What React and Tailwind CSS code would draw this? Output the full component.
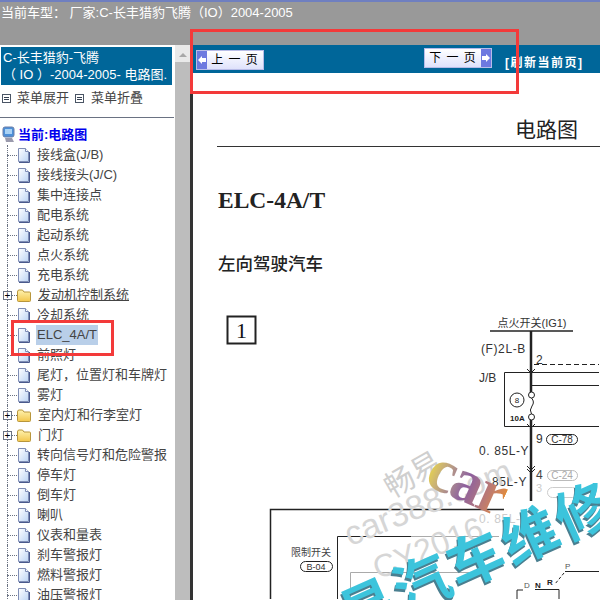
const cjk = "font-['Liberation_Sans','Noto_Sans_CJK_SC',sans-serif]"

const items = [
  { label: '接线盒(J/B)' },
  { label: '接线接头(J/C)' },
  { label: '集中连接点' },
  { label: '配电系统' },
  { label: '起动系统' },
  { label: '点火系统' },
  { label: '充电系统' },
  { label: '发动机控制系统', folder: true, hover: true },
  { label: '冷却系统' },
  { label: 'ELC_4A/T', selected: true },
  { label: '前照灯' },
  { label: '尾灯，位置灯和车牌灯' },
  { label: '雾灯' },
  { label: '室内灯和行李室灯', folder: true },
  { label: '门灯', folder: true },
  { label: '转向信号灯和危险警报' },
  { label: '停车灯' },
  { label: '倒车灯' },
  { label: '喇叭' },
  { label: '仪表和量表' },
  { label: '刹车警报灯' },
  { label: '燃料警报灯' },
  { label: '油压警报灯' },
]

function FileIcon() {
  return (
    <svg width="13" height="15" viewBox="0 0 13 15" className="shrink-0">
      <defs>
        <linearGradient id="page" x1="0" y1="0" x2="1" y2="1">
          <stop offset="0" stopColor="#ffffff" />
          <stop offset="1" stopColor="#bcd4f4" />
        </linearGradient>
      </defs>
      <path d="M1.5 .5H8.5L11.5 3.5V13.5H1.5Z" fill="url(#page)" stroke="#7f8db5" />
      <path d="M8.5 .5V3.5H11.5" fill="#fff" stroke="#7f8db5" />
      <path d="M2 14.5H12.5V4" fill="none" stroke="#4a5a8c" />
    </svg>
  )
}

function FolderIcon() {
  return (
    <svg width="14" height="13" viewBox="0 0 14 13" className="shrink-0">
      <defs>
        <linearGradient id="folder" x1="0" y1="0" x2="0" y2="1">
          <stop offset="0" stopColor="#fff3b0" />
          <stop offset="1" stopColor="#f2c64c" />
        </linearGradient>
      </defs>
      <path d="M.5 3V11.5Q.5 12.5 1.5 12.5H12.5Q13.5 12.5 13.5 11.5V4Q13.5 3 12.5 3H7L5.5 1H2Q.5 1 .5 3Z" fill="url(#folder)" stroke="#b8963c" />
    </svg>
  )
}

function MenuIcon() {
  return (
    <span className="flex h-[9px] w-[9px] shrink-0 flex-col justify-center gap-px border border-gray-600 bg-white px-px">
      <span className="h-px bg-gray-700" />
      <span className="h-px bg-gray-700" />
    </span>
  )
}

function TreeRow({ label, folder, hover, selected }) {
  return (
    <div className="flex h-5 items-center">
      <div className="relative h-full w-[17px] shrink-0">
        <span className="absolute left-[7px] top-0 h-full border-l border-dotted border-gray-500" />
        <span className="absolute left-[7px] top-[10px] w-[10px] border-t border-dotted border-gray-500" />
        {folder && (
          <span className="absolute left-[3px] top-[6px] flex h-[9px] w-[9px] items-center justify-center border border-gray-500 bg-white text-[10px] leading-none text-black">
            +
          </span>
        )}
      </div>
      {folder ? <FolderIcon /> : <FileIcon />}
      <span
        className={`ml-[6px] whitespace-nowrap px-px text-[13px] leading-5 text-[#444] ${hover ? 'underline' : ''} ${selected ? 'bg-[#b9cfe9]' : ''}`}
      >
        {label}
      </span>
    </div>
  )
}

function Sidebar() {
  return (
    <aside className="flex w-[193px] shrink-0 border-r-[3px] border-[#333]">
      <div className="w-[175px] shrink-0 overflow-hidden bg-white pt-[2px]">
        <div className="mx-px w-[171px] overflow-hidden bg-[#006699] pb-[2px] pl-[2px] pt-[2px] text-[13px] leading-[17px] whitespace-nowrap text-white">
          <div>C-长丰猎豹-飞腾</div>
          <div>（ IO ）-2004-2005- 电路图.</div>
        </div>
        <div className="mt-[3px] flex items-center pb-[9px] pl-[2px] text-[13px] leading-5 text-[#444]">
          <MenuIcon />
          <span className="ml-[6px]">菜单展开</span>
          <span className="ml-[6px]"><MenuIcon /></span>
          <span className="ml-[7px]">菜单折叠</span>
        </div>
        <div className="mr-px border-t border-gray-500" />
        <div className="flex h-[27px] items-center pl-[2px] pt-[6px]">
          <svg width="14" height="17" viewBox="0 0 14 17" className="shrink-0">
            <rect x="1" y="1" width="11" height="10" rx="2" fill="#4c8fd8" stroke="#6a7fa8" />
            <rect x="3" y="3" width="7" height="5" fill="#a9d2f5" />
            <path d="M3 12H10L12 16H4Z" fill="#9a9aac" />
          </svg>
          <span className="ml-[2px] text-[13px] font-bold text-[#0000ee]">当前:电路图</span>
        </div>
        {items.map((item) => (
          <TreeRow key={item.label} {...item} />
        ))}
      </div>
      <div className="flex w-[15px] shrink-0 flex-col bg-[#bdbdbd]">
        <div className="flex h-[17px] items-center justify-center bg-[#e9e9e9] pt-[2px]">
          <span className="h-0 w-0 border-x-4 border-b-4 border-x-transparent border-b-[#a8a8a8]" />
        </div>
      </div>
    </aside>
  )
}

function PageButton({ children, dir }) {
  const arrow = (
    <span className="flex h-full w-[10px] shrink-0 items-center justify-center bg-[#6d79e0]">
      <svg width="8" height="8" viewBox="0 0 8 8">
        <path d={dir === 'prev' ? 'M0 4L4 0V2H8V6H4V8Z' : 'M8 4L4 0V2H0V6H4V8Z'} fill="#fff" />
      </svg>
    </span>
  )
  return (
    <div className="flex h-[20px] w-[68px] items-center border border-[#b8bce8] bg-gradient-to-b from-white to-[#dfe2fb] text-[12px] text-black">
      {dir === 'prev' && arrow}
      <span className="flex-1 text-center tracking-[1px] whitespace-nowrap">{children}</span>
      {dir === 'next' && arrow}
    </div>
  )
}

function Diagram() {
  const line = { stroke: '#222', fill: 'none' }
  return (
    <svg width="406" height="300" viewBox="194 300 406 300" className="block font-['Liberation_Sans','Noto_Sans_CJK_SC',sans-serif]">
      <rect x="228.5" y="317.5" width="28" height="27" fill="none" stroke="#222" strokeWidth="2" />
      <text x="242.5" y="339" textAnchor="middle" fontSize="22" fill="#111" fontFamily="Liberation Serif">1</text>

      <text x="533" y="328" textAnchor="middle" fontSize="11" fill="#333">点火开关(IG1)</text>
      <path d="M491 332H574" {...line} strokeWidth="1.5" />
      <path d="M532 332V502" {...line} strokeWidth="2.5" />
      <text x="482" y="354" fontSize="12" letterSpacing="0.6" fill="#333">(F)2L-B</text>
      <text x="537" y="365" fontSize="12" fill="#333">2</text>
      <path d="M535 365.5H600" {...line} strokeDasharray="5 3" />
      <text x="480" y="383" fontSize="12" fill="#333">J/B</text>
      <path d="M600 373.5H505.5V427.5H600" {...line} />
      <path d="M532 386.5H600" {...line} />
      <path d="M528 370L532 374L536 370M528 425L532 429L536 425" {...line} />
      <circle cx="518" cy="401" r="7" {...line} />
      <text x="518" y="404" textAnchor="middle" fontSize="8" fill="#222">8</text>
      <rect x="530" y="397" width="5" height="20" fill="#fff" />
      <circle cx="532.5" cy="396" r="3" fill="#fff" stroke="#222" />
      <path d="M532.5 399Q536 403 533 407T532.5 415" fill="none" stroke="#222" />
      <circle cx="532.5" cy="418" r="3" fill="#fff" stroke="#222" />
      <text x="511" y="422" fontSize="8" fontWeight="700" fill="#222">10A</text>
      <text x="537" y="444" fontSize="12" fill="#333">9</text>
      <rect x="547.5" y="435.5" width="31" height="10" rx="5" {...line} />
      <text x="563" y="444" textAnchor="middle" fontSize="10" fill="#333">C-78</text>
      <text x="480" y="456" fontSize="12" letterSpacing="0.6" fill="#333">0. 85L-Y</text>
      <path d="M528 467L532 471L536 467M528 470L532 474L536 470" {...line} />
      <text x="537" y="480" fontSize="12" fill="#444">4</text>
      <rect x="548.5" y="471.5" width="30" height="10" rx="5" fill="none" stroke="#bbb" />
      <text x="563" y="480" textAnchor="middle" fontSize="10" fill="#aaa">C-24</text>
      <text x="493" y="487" fontSize="12" letterSpacing="0.6" fill="#333">85L-Y</text>
      <text x="537" y="493" fontSize="11" fill="#ccc">3</text>
      <rect x="548.5" y="488.5" width="30" height="10" rx="5" fill="none" stroke="#ccc" />
      <text x="480" y="524" fontSize="12" letterSpacing="0.6" fill="#ccc">0. 85L-Y</text>

      <path d="M271.5 600V510.5H505" {...line} strokeWidth="1.5" />
      <path d="M338.5 600V537.5H412" {...line} />
      <path d="M412 537.5H500" fill="none" stroke="#aaa" />
      <path d="M351.5 600V573.5H470" fill="none" stroke="#aaa" />
      <text x="292" y="557" fontSize="10" fill="#444">限制开关</text>
      <rect x="301.5" y="562.5" width="32" height="10" rx="5" {...line} />
      <text x="317" y="571" textAnchor="middle" fontSize="9" fill="#333">B-04</text>
      <text x="566" y="570" fontSize="8" fill="#555">P</text>
      <path d="M566 572.5H600" {...line} />
      <path d="M565 574L556 585" {...line} strokeDasharray="3 2" />
      <text x="525" y="589" fontSize="8" fill="#555">D</text>
      <text x="536" y="589" fontSize="8" fontWeight="700" fill="#222">N</text>
      <text x="548" y="586" fontSize="8" fontWeight="700" fill="#222">R</text>
      <path d="M518 600V591H524M536 590.5H560V600" {...line} />
    </svg>
  )
}

function Watermarks() {
  return (
    <div className="pointer-events-none absolute inset-0 overflow-hidden">
      <span className="absolute left-[383px] top-[460px] -rotate-[30deg] text-[30px] leading-none whitespace-nowrap text-[#cfcfcf]">畅易</span>
      <span className="absolute left-[339px] top-[485px] -rotate-[22deg] text-[34px] leading-none whitespace-nowrap text-[#d6d6d6]">car388.com</span>
      <span className="absolute left-[370px] top-[532px] -rotate-[22deg] text-[32px] leading-none whitespace-nowrap text-[#d6d6d6]">CY2016</span>
      <span className="absolute left-[428px] top-[450px] rotate-[24deg] bg-gradient-to-r from-[#e6d24a] via-[#8d5f9e] to-[#e08a3c] bg-clip-text font-['Liberation_Serif',serif] text-[62px] leading-none font-bold tracking-[-2px] text-transparent">car</span>
      <span className="absolute left-[330px] top-[532px] -rotate-[24deg] text-[56px] leading-none font-semibold tracking-[3px] whitespace-nowrap text-[#3cc4dc] [text-shadow:-2px_2px_0_#4a7f90]">易汽车维修</span>
    </div>
  )
}

export default function App() {
  return (
    <div className={`relative flex h-[600px] w-[600px] flex-col overflow-hidden bg-white ${cjk}`}>
      <header className="h-[45px] shrink-0 border-t-2 border-[#6f7fc0] bg-[#999999] pl-px text-[13px] leading-[22px] whitespace-nowrap text-white">
        当前车型： 厂家:C-长丰猎豹飞腾（IO）2004-2005
      </header>
      <div className="flex min-h-0 flex-1">
        <Sidebar />
        <main className="min-w-0 flex-1">
          <div className="flex h-[28px] items-start bg-[#006699] pl-[3px]">
            <div className="mt-[5px]"><PageButton dir="prev">上 一 页</PageButton></div>
            <div className="ml-[160px] mt-[3px]"><PageButton dir="next">下 一 页</PageButton></div>
            <span className="ml-[13px] mt-[9px] text-[12px] leading-[18px] font-bold tracking-[1.5px] whitespace-nowrap text-white">[刷新当前页]</span>
          </div>
          <div className="pl-[24px]">
            <div className="flex h-[74px] items-end justify-end border-b border-[#333] pb-[2px] pr-[22px] text-[21px] leading-7 text-[#222]">
              电路图
            </div>
            <h1 className="ml-px mt-[39px] font-['Liberation_Serif',serif] text-[23.5px] leading-7 font-bold text-[#222]">ELC-4A/T</h1>
            <div className="ml-px mt-[38px] text-[17.5px] leading-6 font-medium text-[#222]">左向驾驶汽车</div>
          </div>
          <div className="mt-[23px]"><Diagram /></div>
        </main>
      </div>
      <Watermarks />
      <div className="pointer-events-none absolute left-[190px] top-[29px] h-[65px] w-[329px] border-[3px] border-[#f33a3a]" />
      <div className="pointer-events-none absolute left-[11px] top-[320px] h-[36px] w-[103px] border-[3px] border-[#f33a3a]" />
    </div>
  )
}
